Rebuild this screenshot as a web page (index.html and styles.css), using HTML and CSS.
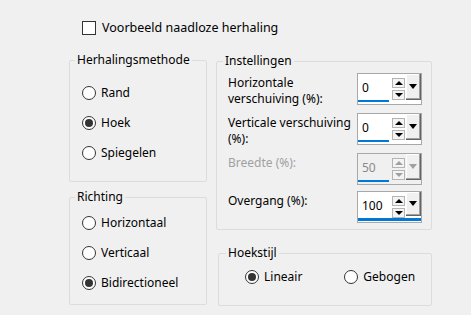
FILE: index.html
```html
<!DOCTYPE html>
<html lang="nl">
<head>
    <meta charset="UTF-8">
    <meta name="viewport" content="width=device-width, initial-scale=1.0">
    <title>Naadloze herhaling</title>
    <link rel="stylesheet" href="styles.css">
</head>
<body>
    <div class="dialog">
        <label class="check-row"><span class="checkbox"></span>Voorbeeld naadloze herhaling</label>

        <div class="columns">
            <div class="col-left">
                <fieldset class="group method">
                    <legend>Herhalingsmethode</legend>
                    <div class="option"><span class="radio"></span>Rand</div>
                    <div class="option"><span class="radio checked"></span>Hoek</div>
                    <div class="option"><span class="radio"></span>Spiegelen</div>
                </fieldset>

                <fieldset class="group direction">
                    <legend>Richting</legend>
                    <div class="option"><span class="radio"></span>Horizontaal</div>
                    <div class="option"><span class="radio"></span>Verticaal</div>
                    <div class="option"><span class="radio checked"></span>Bidirectioneel</div>
                </fieldset>
            </div>

            <div class="col-right">
                <fieldset class="group settings">
                    <legend>Instellingen</legend>
                    <div class="field">
                        <div class="field-label">Horizontale<br>verschuiving (%):</div>
                        <div class="spin">
                            <div class="spin-body">
                                <span class="spin-value">0</span>
                                <span class="spin-arrows"><span class="arrow up"></span><span class="arrow down"></span></span>
                                <span class="spin-drop"></span>
                            </div>
                        </div>
                    </div>
                    <div class="field">
                        <div class="field-label">Verticale verschuiving<br>(%):</div>
                        <div class="spin">
                            <div class="spin-body">
                                <span class="spin-value">0</span>
                                <span class="spin-arrows"><span class="arrow up"></span><span class="arrow down"></span></span>
                                <span class="spin-drop"></span>
                            </div>
                        </div>
                    </div>
                    <div class="field disabled">
                        <div class="field-label">Breedte (%):</div>
                        <div class="spin">
                            <div class="spin-body">
                                <span class="spin-value">50</span>
                                <span class="spin-arrows"><span class="arrow up"></span><span class="arrow down"></span></span>
                                <span class="spin-drop"></span>
                            </div>
                        </div>
                    </div>
                    <div class="field focused">
                        <div class="field-label">Overgang (%):</div>
                        <div class="spin">
                            <div class="spin-body">
                                <span class="spin-value">100</span>
                                <span class="spin-arrows"><span class="arrow up"></span><span class="arrow down"></span></span>
                                <span class="spin-drop"></span>
                            </div>
                        </div>
                    </div>
                </fieldset>

                <fieldset class="group corner">
                    <legend>Hoekstijl</legend>
                    <div class="option-row">
                        <div class="option"><span class="radio checked"></span>Lineair</div>
                        <div class="option"><span class="radio"></span>Gebogen</div>
                    </div>
                </fieldset>
            </div>
        </div>
    </div>
</body>
</html>
```

FILE: styles.css
```css
body {
    margin: 0;
    background-color: #f0f0f0;
    font-family: "Noto Sans", sans-serif;
    font-size: 12px;
    line-height: 16px;
    color: #000;
}

.dialog {
    padding: 20px 0 0 69px;
}

.check-row {
    display: flex;
    align-items: center;
    margin-left: 13px;
    height: 16px;
    font-size: 12.5px;
}

.checkbox {
    width: 14px;
    height: 14px;
    box-sizing: border-box;
    border: 1px solid #333;
    background: #fff;
    margin-right: 6px;
}

.columns {
    display: flex;
    margin-top: 16px;
}

.col-left {
    width: 138px;
}

.col-right {
    width: 216px;
    margin-left: 9px;
    margin-top: 1px;
}

/* group boxes: padding-left stays 0 so the legend sits near the left edge */
.group {
    margin: 0;
    border: 1px solid #dcdcdc;
    border-radius: 2px;
    min-width: 0;
    padding-left: 0;
    padding-right: 0;
}

.group legend {
    margin-left: 7px;
    padding: 0 2px;
    line-height: 16px;
}

.col-left .group legend {
    margin-left: 5px;
}

.method {
    padding-top: 10px;
    padding-bottom: 13px;
}

.direction {
    margin-top: 7px;
    padding-top: 3px;
    padding-bottom: 6px;
}

.method .option,
.direction .option {
    margin-left: 12px;
}

.option {
    display: flex;
    align-items: center;
    height: 30px;
}

.radio {
    position: relative;
    width: 14px;
    height: 14px;
    box-sizing: border-box;
    border: 1px solid #333;
    border-radius: 50%;
    background: #fff;
    margin-right: 5px;
}

.radio.checked::after {
    content: "";
    position: absolute;
    left: 2px;
    top: 2px;
    width: 8px;
    height: 8px;
    border-radius: 50%;
    background: #333;
}

/* Instellingen */
.settings {
    padding: 4px 9px 6px 10px;
}

.settings legend {
    margin-left: -4px;
}

.field {
    display: flex;
    justify-content: space-between;
    align-items: flex-start;
    margin-bottom: 6px;
}

.field:last-child {
    margin-bottom: 0;
}

.field-label {
    padding: 2px 0 0 1px;
}

.field.disabled .field-label {
    color: #a0a0a0;
}

.spin {
    width: 65px;
    height: 32px;
    box-sizing: border-box;
    border: 1px solid #a8a8a8;
    background: #fff;
}

.spin-body {
    display: flex;
    align-items: flex-start;
    height: 28px;
}

.spin-value {
    box-sizing: border-box;
    width: 32px;
    height: 28px;
    padding: 6px 0 0 4px;
    border-bottom: 2px solid #0078d7;
}

.spin-arrows {
    display: flex;
    flex-direction: column;
    gap: 2px;
    margin: 4px 0 0 3px;
}

.arrow {
    display: flex;
    align-items: center;
    justify-content: center;
    width: 13px;
    height: 10px;
    box-sizing: border-box;
    border: 1px solid #b4b4b4;
    background: #f4f4f4;
}

.arrow::before {
    content: "";
    border-left: 4px solid transparent;
    border-right: 4px solid transparent;
}

.arrow.up::before {
    border-bottom: 4px solid #000;
}

.arrow.down::before {
    border-top: 4px solid #000;
}

.spin-drop {
    display: flex;
    align-items: center;
    justify-content: center;
    width: 15px;
    height: 26px;
    margin-left: 1px;
    box-sizing: border-box;
    background: #f0f0f0;
    border-right: 1px solid #646464;
    border-bottom: 1px solid #646464;
    box-shadow: inset -1px -1px 0 #a0a0a0, inset 1px 1px 0 #fff;
}

.spin-drop::before {
    content: "";
    border-left: 4px solid transparent;
    border-right: 4px solid transparent;
    border-top: 5px solid #000;
}

.field.disabled .spin {
    background: #f0f0f0;
}

.field.disabled .spin-value {
    color: #8a8a8a;
}

.field.disabled .arrow::before,
.field.disabled .spin-drop::before {
    border-top-color: #a0a0a0;
    border-bottom-color: #a0a0a0;
}

.field.disabled .arrow.up::before {
    border-top-color: transparent;
}

.field.disabled .arrow.down::before {
    border-bottom-color: transparent;
}

.field.focused .spin-body {
    border-bottom: 3px solid #0078d7;
    height: 26px;
}

.field.focused .spin-value {
    border-bottom: none;
    height: 26px;
}

.field.focused .spin-drop {
    height: 24px;
}

/* Hoekstijl */
.corner {
    margin-top: 15px;
    margin-left: 2px;
    padding-top: 1px;
    padding-bottom: 13px;
}

.option-row {
    display: flex;
    gap: 42px;
    padding-left: 26px;
}
```
